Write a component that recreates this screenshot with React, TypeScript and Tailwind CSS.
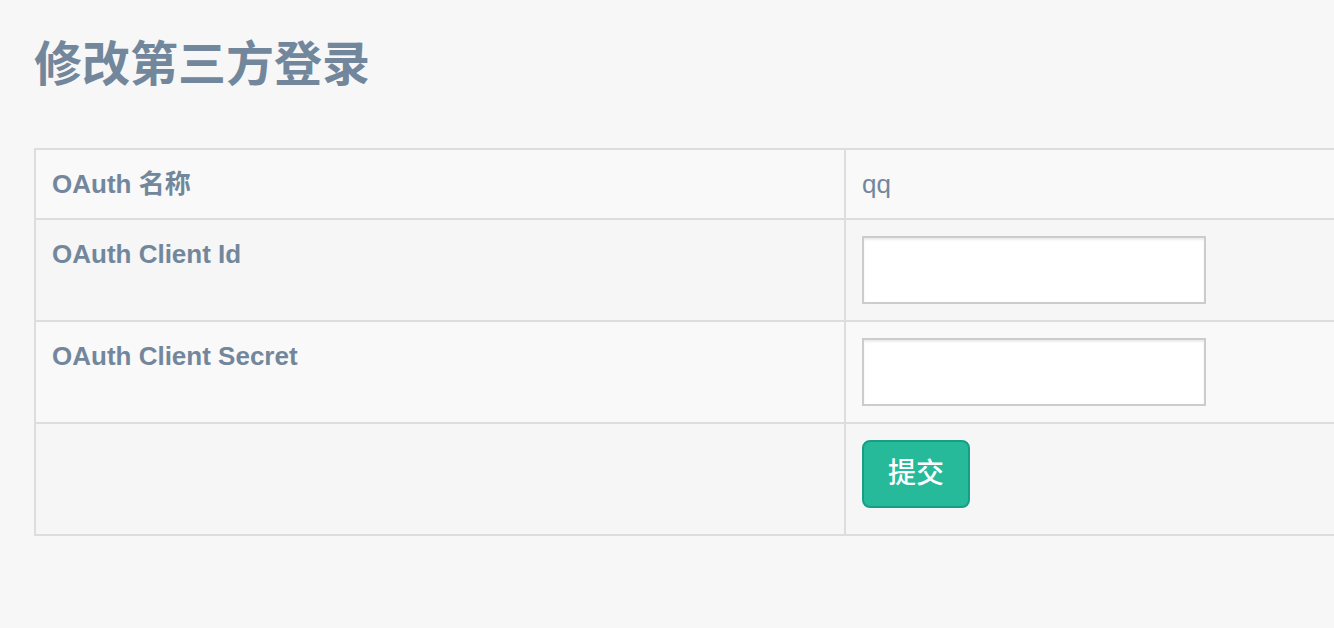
const font = { fontFamily: '"Liberation Sans", "Noto Sans CJK SC", Arial, sans-serif' };

function Label({ children }: { children: React.ReactNode }) {
  return <div className="px-[16px] py-[16px] text-[26px] leading-[36px] font-bold text-[#73879c]">{children}</div>;
}

function TextInput() {
  return (
    <input
      type="text"
      className="w-[344px] h-[68px] bg-white border-2 border-[#ccc] shadow-[inset_0_2px_2px_rgba(0,0,0,0.075)] outline-none px-[24px] text-[28px]"
    />
  );
}

export default function App() {
  const rows = [
    {
      label: 'OAuth 名称',
      bg: 'bg-[#f9f9f9]',
      right: <div className="text-[26px] leading-[36px] text-[#73879c]">qq</div>,
    },
    { label: 'OAuth Client Id', bg: 'bg-[#f6f6f6]', right: <TextInput /> },
    { label: 'OAuth Client Secret', bg: 'bg-[#f9f9f9]', right: <TextInput /> },
    {
      label: '',
      bg: 'bg-[#f6f6f6]',
      right: (
        <button className="mb-[10px] h-[68px] px-[24px] rounded-[8px] border-2 border-[#169f85] bg-[#26b99a] text-white text-[28px] leading-[40px] font-medium">
          提交
        </button>
      ),
    },
  ];

  return (
    <div className="min-h-[628px] w-full overflow-hidden bg-[#f7f7f7]" style={font}>
      <div className="pl-[34px]">
        <h3 className="pt-[38px] text-[48px] leading-[53px] font-bold text-[#73879c]">修改第三方登录</h3>
        <div className="mt-[57px] w-[1340px] border-l-2 border-t-2 border-[#ddd]">
          {rows.map((row, i) => (
            <div key={i} className={`grid grid-cols-[810px_1fr] border-b-2 border-[#ddd] ${row.bg}`}>
              <div className="border-r-2 border-[#ddd]">
                <Label>{row.label}</Label>
              </div>
              <div className="px-[16px] py-[16px]">{row.right}</div>
            </div>
          ))}
        </div>
      </div>
    </div>
  );
}
